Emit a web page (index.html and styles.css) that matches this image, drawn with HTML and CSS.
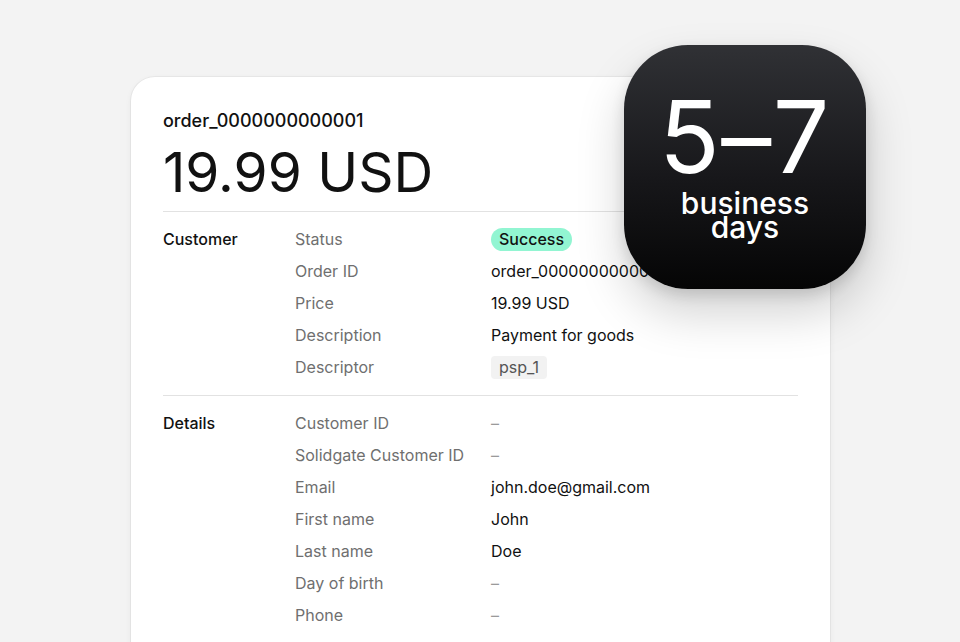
FILE: index.html
```html
<!DOCTYPE html>
<html lang="en">
<head>
<meta charset="UTF-8">
<title>Order details</title>
<link rel="stylesheet" href="styles.css">
</head>
<body>
<div class="stage">
  <div class="card">
    <div class="order-id">order_0000000000001</div>
    <div class="amount">19.99 USD</div>

    <div class="section">
      <div class="section-title">Customer</div>
      <div class="rows">
        <div class="key">Status</div><div class="val"><span class="pill success">Success</span></div>
        <div class="key">Order ID</div><div class="val">order_0000000000001</div>
        <div class="key">Price</div><div class="val">19.99 USD</div>
        <div class="key">Description</div><div class="val">Payment for goods</div>
        <div class="key">Descriptor</div><div class="val"><span class="pill tag">psp_1</span></div>
      </div>
    </div>

    <div class="section">
      <div class="section-title">Details</div>
      <div class="rows">
        <div class="key">Customer ID</div><div class="val empty">–</div>
        <div class="key">Solidgate Customer ID</div><div class="val empty">–</div>
        <div class="key">Email</div><div class="val">john.doe@gmail.com</div>
        <div class="key">First name</div><div class="val">John</div>
        <div class="key">Last name</div><div class="val">Doe</div>
        <div class="key">Day of birth</div><div class="val empty">–</div>
        <div class="key">Phone</div><div class="val empty">–</div>
      </div>
    </div>
  </div>

  <div class="badge">
    <div class="badge-num">5–7</div>
    <div class="badge-text">business<br>days</div>
  </div>
</div>
</body>
</html>
```

FILE: styles.css
```css
body {
  margin: 0;
  background: #f3f3f3;
  font-family: Inter, "Noto Sans", sans-serif;
  color: #111;
  overflow: hidden;
}

.stage {
  position: relative;
  height: 642px;
  padding: 77px 0 0 131px;
  box-sizing: border-box;
  overflow: hidden;
}

.card {
  width: 699px;
  height: 640px;
  box-sizing: border-box;
  background: #fff;
  border-radius: 24px;
  padding: 32px 32px 0 32px;
  box-shadow: 0 0 0 1px rgba(0,0,0,0.04), 0 2px 6px rgba(0,0,0,0.06);
}

.order-id {
  font-size: 18px;
  font-weight: 500;
  line-height: 24px;
}

.amount {
  font-size: 55px;
  font-weight: 400;
  line-height: 64px;
  margin: 7px 0 7px;
}

.section {
  display: flex;
  border-top: 1px solid #e2e2e2;
  padding: 15px 0 16px;
}

.section-title {
  width: 132px;
  font-size: 16px;
  font-weight: 500;
  line-height: 24px;
}

.rows {
  display: grid;
  grid-template-columns: 196px 1fr;
  grid-auto-rows: 24px;
  row-gap: 8px;
  font-size: 16px;
  line-height: 24px;
}

.key {
  color: #6f6f6f;
}

.val {
  color: #111;
}

.val.empty {
  color: #9a9a9a;
}

.pill {
  display: inline-block;
  padding: 0 8px;
  border-radius: 12px;
  line-height: 23px;
}

.success {
  background: #92f5d2;
  font-weight: 500;
}

.tag {
  background: #f2f2f2;
  color: #555;
  border-radius: 4px;
}

.badge {
  position: absolute;
  left: 624px;
  top: 45px;
  width: 242px;
  height: 244px;
  border-radius: 64px;
  background: linear-gradient(180deg, #303135 0%, #17171a 55%, #050505 100%);
  box-shadow: 0 24px 48px rgba(0,0,0,0.18), 0 6px 14px rgba(0,0,0,0.12);
  color: #fff;
  text-align: center;
  box-sizing: border-box;
  padding-top: 42px;
}

.badge-num {
  font-size: 100px;
  font-weight: 400;
  line-height: 100px;
  letter-spacing: 1.5px;
}

.badge-text {
  font-size: 30px;
  font-weight: 500;
  line-height: 24px;
  margin-top: 4px;
}
```
